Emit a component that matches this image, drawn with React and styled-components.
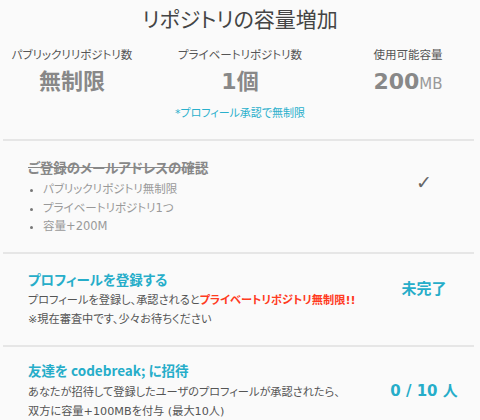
import React from "react"
import styled, { createGlobalStyle } from "styled-components"

const GlobalStyle = createGlobalStyle`
  html, body {
    margin: 0;
    padding: 0;
    background: #fafafa;
  }
  body {
    font-family: "DejaVu Sans", "Noto Sans CJK JP", sans-serif;
    font-feature-settings: "palt" 1;
    color: #555;
  }
`

const Page = styled.div`
  width: 480px;
  height: 420px;
  overflow: hidden;
  background: #fafafa;
`

const Heading = styled.h1`
  margin: 0;
  padding-top: 6px;
  text-align: center;
  font-size: 21px;
  font-weight: 400;
  line-height: 28px;
  color: #444;
`

const Stats = styled.div`
  display: grid;
  grid-template-columns: repeat(3, 168px);
  margin: 13px -12px 0;
`

const Stat = styled.div`
  display: flex;
  flex-direction: column;
  align-items: center;
`

const StatLabel = styled.div`
  font-size: 11.5px;
  line-height: 16px;
  color: #555;
`

const StatValue = styled.div`
  margin-top: 7px;
  font-size: 22px;
  font-weight: 700;
  line-height: 24px;
  color: #888;
`

const Unit = styled.span`
  font-size: 15px;
  font-weight: 400;
  color: #999;
`

const Note = styled.div`
  margin: 10px 0 17px;
  text-align: center;
  font-size: 11px;
  line-height: 16px;
  color: #2ab0cc;
`

const Divider = styled.hr`
  margin: 0 6px 0 3px;
  border: 0;
  height: 2px;
  background: #e6e6e6;
`

const Section = styled.section`
  display: flex;
  align-items: flex-start;
  padding: ${(p) => p.$pad};
`

const Body = styled.div`
  flex: 1;
`

const Side = styled.div`
  width: 100px;
  margin: ${(p) => p.$top}px 6px 0 0;
  text-align: center;
  font-size: ${(p) => (p.$check ? "19px" : "15px")};
  font-weight: ${(p) => (p.$check ? 400 : 700)};
  line-height: 20px;
  color: ${(p) => (p.$check ? "#666" : "#26adc9")};
`

const Title = styled.div`
  font-family: "Noto Sans CJK JP", sans-serif;
  font-size: 13.5px;
  font-weight: 700;
  line-height: 18px;
  color: ${(p) => (p.$done ? "#888" : "#26adc9")};
  text-decoration: ${(p) => (p.$done ? "line-through" : "none")};
`

const List = styled.ul`
  margin: 4px 0 0;
  padding: 0 0 0 15px;
  list-style: disc;
  color: #999;
`

const Item = styled.li`
  font-size: 11.5px;
  line-height: 18.5px;
  &::marker {
    color: #777;
    font-size: 11px;
  }
`

const Text = styled.div`
  margin-top: ${(p) => p.$gap || 0}px;
  font-size: 11.2px;
  line-height: 19px;
  color: #555;
`

const Em = styled.span`
  font-weight: 700;
  color: #ff3b1f;
`

export default function App() {
  return (
    <Page>
      <GlobalStyle />
      <Heading>リポジトリの容量増加</Heading>
      <Stats>
        <Stat>
          <StatLabel>パブリックリリポジトリ数</StatLabel>
          <StatValue>無制限</StatValue>
        </Stat>
        <Stat>
          <StatLabel>プライベートリポジトリ数</StatLabel>
          <StatValue>1個</StatValue>
        </Stat>
        <Stat>
          <StatLabel>使用可能容量</StatLabel>
          <StatValue>
            200<Unit>MB</Unit>
          </StatValue>
        </Stat>
      </Stats>
      <Note>*プロフィール承認で無制限</Note>
      <Divider />

      <Section $pad="17px 0 16px 28px">
        <Body>
          <Title $done>ご登録のメールアドレスの確認</Title>
          <List>
            <Item>パブリックリポジトリ無制限</Item>
            <Item>プライベートリポジトリ1つ</Item>
            <Item>容量+200M</Item>
          </List>
        </Body>
        <Side $check $top={14}>✓</Side>
      </Section>
      <Divider />

      <Section $pad="16px 0 16px 28px">
        <Body>
          <Title>プロフィールを登録する</Title>
          <Text $gap={3}>
            プロフィールを登録し、承認されると<Em>プライベートリポジトリ無制限!!</Em>
          </Text>
          <Text>※現在審査中です、少々お待ちください</Text>
        </Body>
        <Side $top={9}>未完了</Side>
      </Section>
      <Divider />

      <Section $pad="14px 0 0 28px">
        <Body>
          <Title>友達を codebreak; に招待</Title>
          <Text $gap={4}>あなたが招待して登録したユーザのプロフィールが承認されたら、</Text>
          <Text>双方に容量+100MBを付与 (最大10人)</Text>
        </Body>
        <Side $top={20}>0 / 10 人</Side>
      </Section>
    </Page>
  )
}
